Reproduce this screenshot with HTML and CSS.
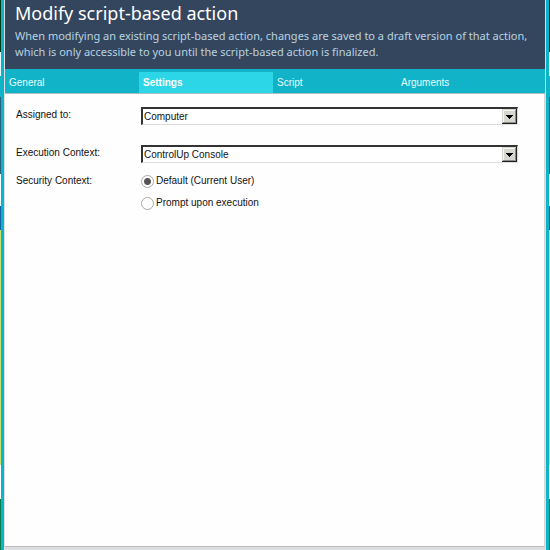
FILE: index.html
```html
<!DOCTYPE html>
<html lang="en">
<head>
<meta charset="utf-8">
<title>Modify script-based action</title>
<link rel="stylesheet" href="styles.css">
</head>
<body>
<main class="dialog">
  <header class="header">
    <h1 class="title">Modify script-based action</h1>
    <p class="intro">When modifying an existing script-based action, changes are saved to a draft version of that action,<br>which is only accessible to you until the script-based action is finalized.</p>
  </header>
  <nav class="tabs">
    <button class="tab" type="button">General</button>
    <button class="tab tab-active" type="button">Settings</button>
    <button class="tab" type="button">Script</button>
    <button class="tab" type="button">Arguments</button>
  </nav>
  <form class="panel">
    <div class="row row-wide">
      <label class="name" for="assigned">Assigned to:</label>
      <div class="combo">
        <select class="select" id="assigned"><option>Computer</option></select>
        <svg class="arrow" viewBox="0 0 15 15" aria-hidden="true" shape-rendering="crispEdges"><path fill="#d6d7ce" d="M0 0h15v15H0z"/><path fill="#f4f4f0" d="M1 1h12v1H2v11H1z"/><path fill="#8c8c84" d="M13 1h1v13H1v-1h12z"/><path fill="#222" d="M14 0h1v15H0v-1h14z"/><path fill="#000" d="M4 6h7v1h-1v1H9v1H8v1H7V9H6V8H5V7H4z"/></svg>
      </div>
    </div>
    <div class="row">
      <label class="name" for="execution">Execution Context:</label>
      <div class="combo">
        <select class="select" id="execution"><option>ControlUp Console</option></select>
        <svg class="arrow" viewBox="0 0 15 15" aria-hidden="true" shape-rendering="crispEdges"><path fill="#d6d7ce" d="M0 0h15v15H0z"/><path fill="#f4f4f0" d="M1 1h12v1H2v11H1z"/><path fill="#8c8c84" d="M13 1h1v13H1v-1h12z"/><path fill="#222" d="M14 0h1v15H0v-1h14z"/><path fill="#000" d="M4 6h7v1h-1v1H9v1H8v1H7V9H6V8H5V7H4z"/></svg>
      </div>
    </div>
    <div class="row" role="radiogroup" aria-labelledby="security">
      <span class="name" id="security">Security Context:</span>
      <div class="choices">
        <label class="choice"><input class="radio" type="radio" name="security" checked>Default (Current User)</label>
        <label class="choice"><input class="radio" type="radio" name="security">Prompt upon execution</label>
      </div>
    </div>
  </form>
</main>
</body>
</html>
```
FILE: styles.css
```css
* {
  box-sizing: border-box;
}

body {
  margin: 0;
  min-height: 100vh;
  display: flex;
  padding: 0 1px;
  background: linear-gradient(#063a18 0 52px, #e8fbfc 52px 76px, #10b5ca 76px 97px, #2b6178 97px 174px, #f2ffff 174px 206px, #1261a0 206px 230px, #c5e36b 230px 465px, #fff 465px 499px, #087f48 499px);
  font: 10px/14px "Liberation Sans", Arial, sans-serif;
  color: #111;
}

.dialog {
  flex: 1;
  display: flex;
  flex-direction: column;
  padding: 0 1px 3px;
  background: #dcdfe1;
  border: solid #0bb4c8;
  border-width: 0 3px;
}

.header {
  height: 69px;
  padding: 0 10px;
  background: #34465e;
}

.title {
  margin: 0;
  font: 18px/26px "Noto Sans", "Open Sans", sans-serif;
  color: #fff;
}

.intro {
  margin: 2px 0 0;
  font: 11px/16px "Noto Sans", "Open Sans", sans-serif;
  color: #b9d3e0;
  white-space: nowrap;
}

.tabs {
  display: grid;
  grid-template-columns: 134fr 134fr 124fr 148fr;
  height: 25px;
  padding-top: 3px;
  background: #10b3c7;
  border-bottom: 1px solid #a9bfc4;
}

.tab {
  padding: 0 4px;
  border: 0;
  background: none;
  font: inherit;
  color: #e8fbfd;
  text-align: left;
}

.tab-active {
  background: #2dd6e6;
  font-weight: bold;
  color: #fff;
}

.panel {
  flex: 1;
  padding: 13px 26px 0 11px;
  background: #fefefe;
  border-right: 1px solid #d4d4d4;
  border-bottom: 1px solid #bcbcbc;
}

.row {
  display: grid;
  grid-template-columns: 125px 1fr;
  align-items: start;
  margin-bottom: 10px;
}

.row-wide {
  margin-bottom: 20px;
}

.name {
  padding-top: 1px;
}

.combo {
  position: relative;
  display: flex;
}

.select {
  appearance: none;
  width: 100%;
  height: 18px;
  padding: 0 16px 0 1px;
  border: solid #333;
  border-width: 2px 1px 1px 2px;
  border-right-color: #ddd;
  border-bottom-color: #ddd;
  border-radius: 0;
  background: #fff;
  font: inherit;
  color: #111;
}

.arrow {
  position: absolute;
  top: 2px;
  right: 1px;
  width: 15px;
  height: 15px;
  pointer-events: none;
}

.choices {
  display: grid;
  gap: 8px;
  padding-top: 1px;
}

.choice {
  display: flex;
  align-items: center;
  gap: 2px;
}

.radio {
  appearance: none;
  width: 13px;
  height: 13px;
  margin: 0;
  border: 1px solid #aaa;
  border-radius: 50%;
  background: #fff;
}

.radio:checked {
  background: radial-gradient(circle, #555 0 3px, #fff 4px);
}
```
